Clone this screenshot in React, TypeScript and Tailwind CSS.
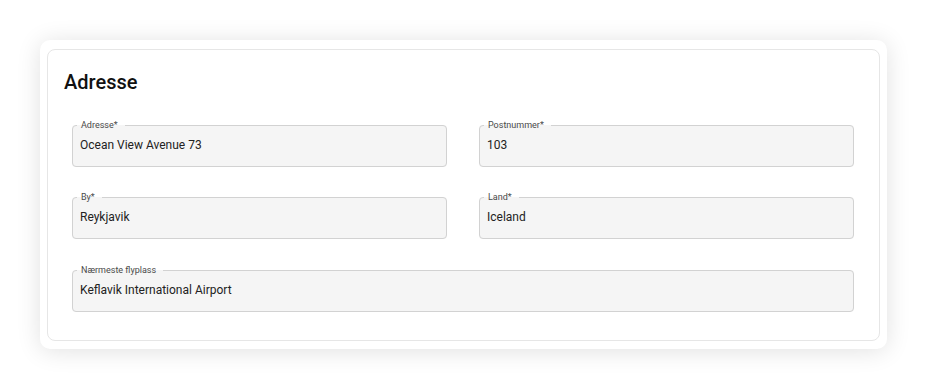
import React from 'react';

type Field = { label: string; value: string; wide?: boolean };

const fields: Field[] = [
  { label: 'Adresse*', value: 'Ocean View Avenue 73' },
  { label: 'Postnummer*', value: '103' },
  { label: 'By*', value: 'Reykjavik' },
  { label: 'Land*', value: 'Iceland' },
  { label: 'Nærmeste flyplass', value: 'Keflavik International Airport', wide: true },
];

const OutlinedField: React.FC<Field> = ({ label, value, wide }) => (
  <fieldset
    className={`rounded-[4px] border border-[#d2d2d2] bg-[#f5f5f5] px-[7px] ${wide ? 'col-span-2 mt-px' : ''}`}
  >
    <legend className="-ml-[3px] pl-[4px] pr-[7px] text-[9px] leading-3 text-[#4a4a4a]">{label}</legend>
    <div className="pt-[4px] pb-[11px] text-[12px] leading-5 text-[#222]">{value}</div>
  </fieldset>
);

export default function App() {
  return (
    <div className="bg-white p-10 font-['Roboto','Liberation_Sans',sans-serif]">
      <div className="rounded-[10px] bg-white px-[7px] pt-[9px] pb-2 shadow-[0_2px_24px_rgba(0,0,0,0.12)]">
        <div className="rounded-[8px] border border-[#e6e6e6] bg-white px-4 pt-[18px] pb-[28px]">
          <h2 className="text-[20px] font-medium leading-7 text-[#111]">Adresse</h2>
          <div className="mt-[23px] grid grid-cols-2 gap-x-8 gap-y-6 pl-2 pr-[9px]">
            {fields.map((f) => (
              <OutlinedField key={f.label} {...f} />
            ))}
          </div>
        </div>
      </div>
    </div>
  );
}
